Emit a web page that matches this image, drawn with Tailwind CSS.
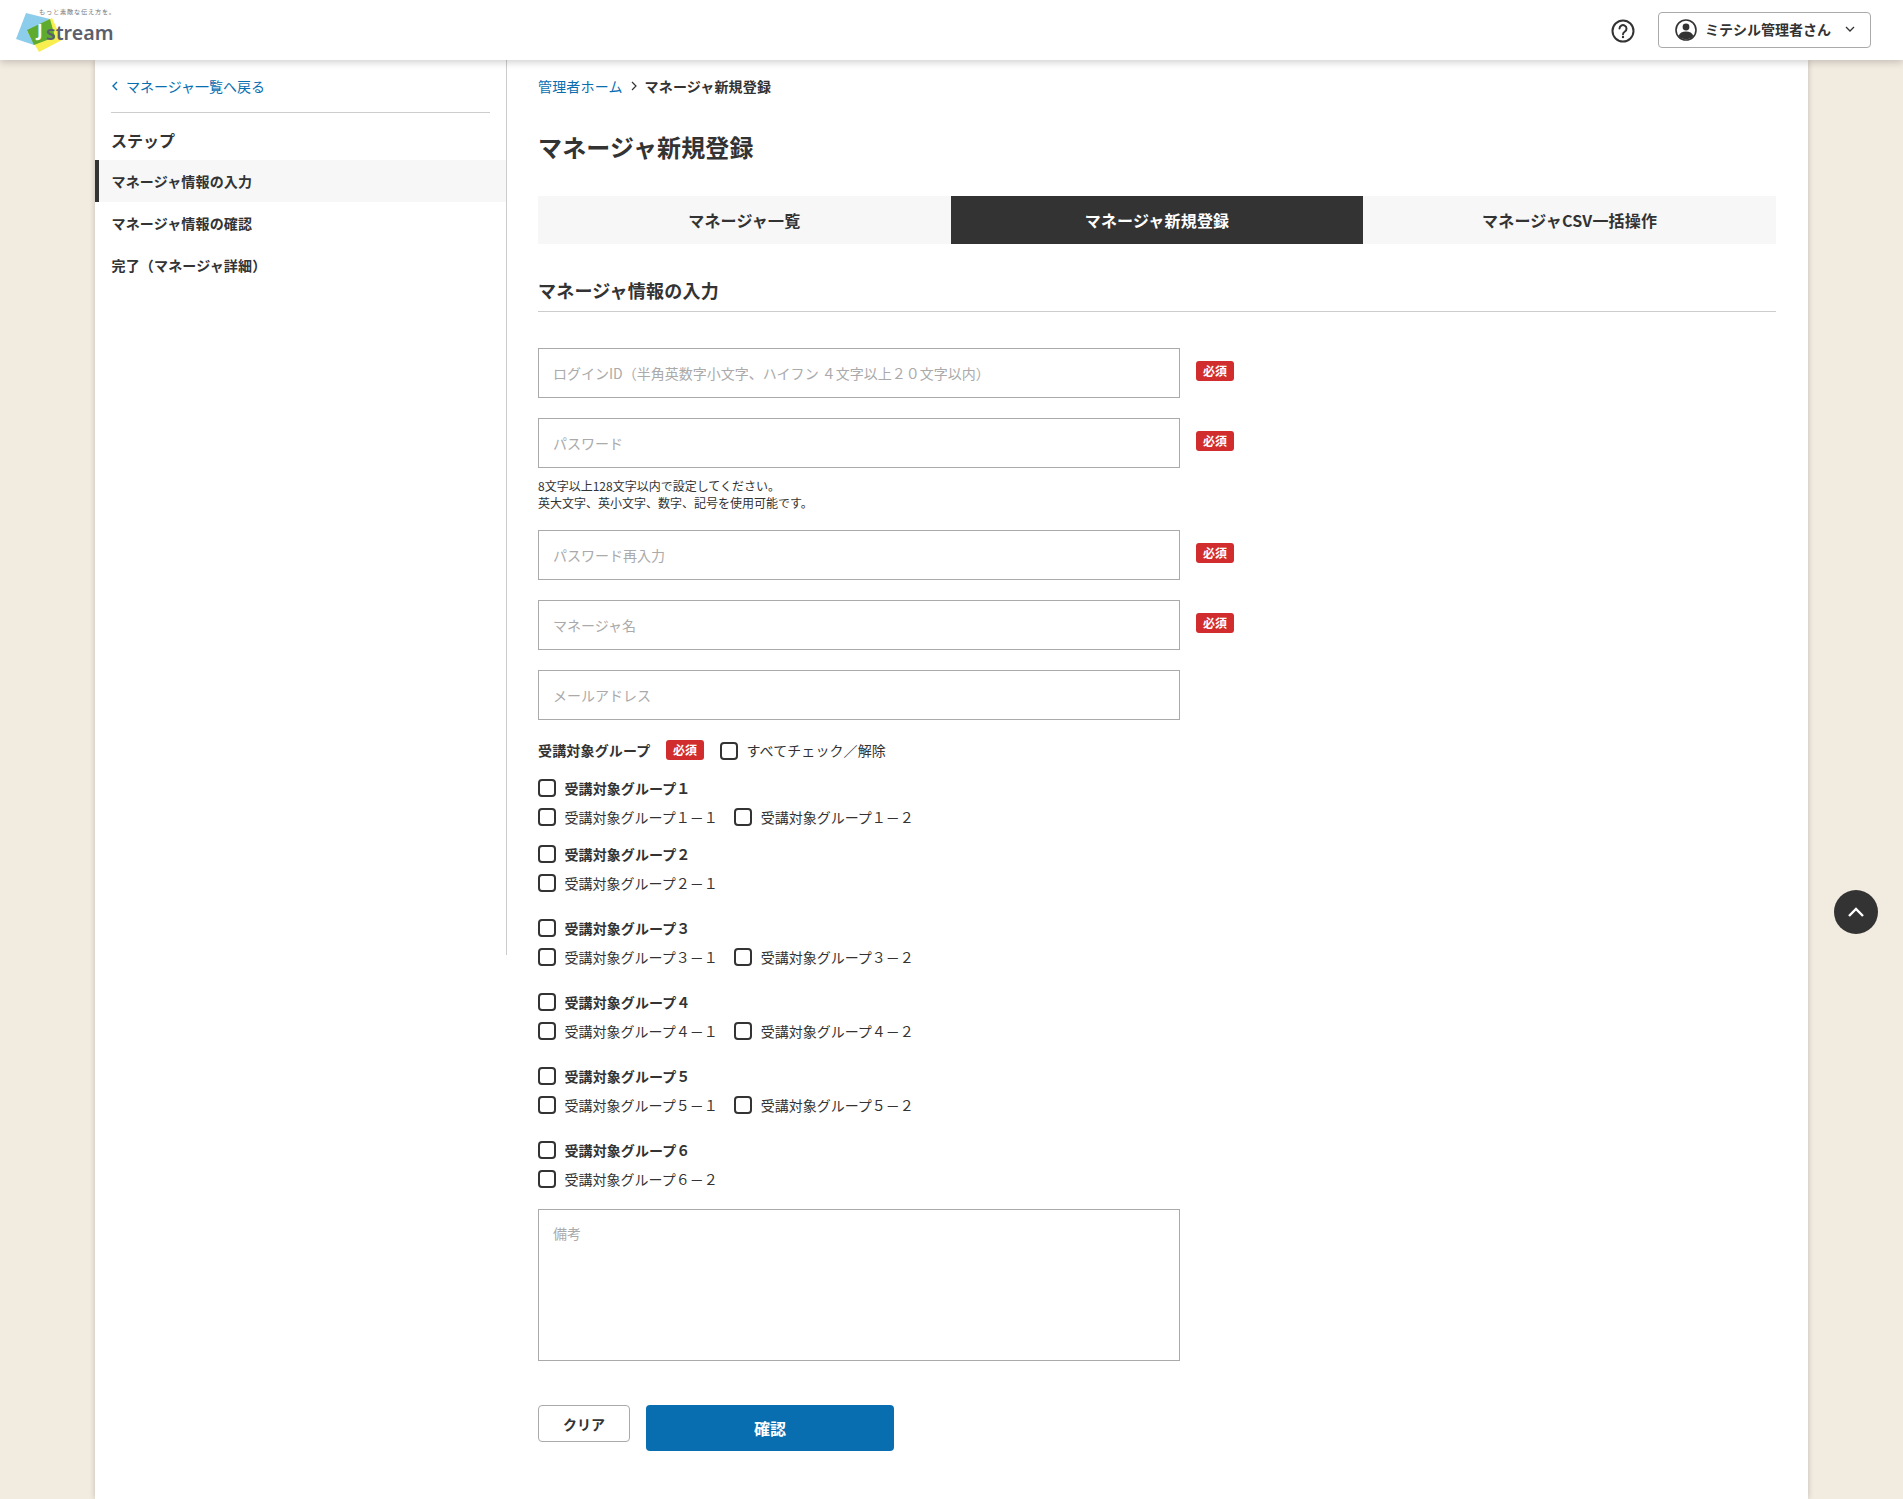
<!DOCTYPE html>
<html lang="ja">
<head>
  <meta charset="UTF-8">
  <title>マネージャ新規登録</title>
  <script src="https://cdn.jsdelivr.net/npm/@tailwindcss/browser@4"></script>
</head>
<body class="relative bg-[#f2ebe0] text-[#333] text-sm font-['Noto_Sans_CJK_JP','Noto_Sans',sans-serif]">
  <!-- header -->
  <header class="relative z-10 h-[60px] bg-white shadow-[0_2px_8px_rgba(0,0,0,0.2)] flex items-center justify-between pr-8">
    <svg class="w-[130px] h-[60px]" viewBox="0 0 130 60">
      <text x="39" y="13.5" font-size="6.2" letter-spacing="0.8" fill="#777">もっと素敵な伝え方を。</text>
      <polygon points="26,13 50,19 34,45 16,39" fill="#8dcdec"/>
      <polygon points="27,31 52,18 62,40 39,52" fill="#f8ee4f"/>
      <polygon points="27,30 50,19 55,37 34,45" fill="#5fab2e"/>
      <text x="37" y="37" font-size="17" font-weight="700" fill="#fff" font-family="Noto Sans">J</text>
      <text x="46" y="40" font-size="19.6" font-weight="600" fill="#5b5e6b" font-family="Noto Sans">stream</text>
    </svg>
    <div class="flex items-center gap-[23px]">
      <svg class="w-6 h-6 mt-[2px]" viewBox="0 0 24 24" fill="none" stroke="#333" stroke-width="2">
        <circle cx="12" cy="12" r="10.5"/>
        <path d="M8.5 9.5a3.5 3.5 0 1 1 5.4 3c-1.2.8-1.9 1.4-1.9 2.8" stroke-linecap="round"/>
        <circle cx="12" cy="18" r="1.2" fill="#333" stroke="none"/>
      </svg>
      <button class="w-[213px] h-9 rounded border border-[#aaa] bg-white flex items-center pl-4 font-bold">
        <svg class="w-[22px] h-[22px]" viewBox="0 0 22 22">
          <circle cx="11" cy="11" r="10" fill="none" stroke="#333" stroke-width="1.6"/>
          <circle cx="11" cy="8" r="3.4" fill="#333"/>
          <path d="M3.6 17c1-3.2 3.8-4.6 7.4-4.6s6.4 1.4 7.4 4.6a10 10 0 0 1-14.8 0z" fill="#333"/>
        </svg>
        <span class="ml-2 -mt-[2px]">ミテシル管理者さん</span>
        <svg class="w-[10px] h-[6px] ml-[14px] -mt-[2px]" viewBox="0 0 10 6" fill="none" stroke="#333" stroke-width="1.3"><path d="M1 1l4 4 4-4"/></svg>
      </button>
    </div>
  </header>

  <div class="w-[1713px] min-h-[1439px] mx-auto bg-white shadow-[0_0_6px_rgba(0,0,0,0.2)] flex items-start">
    <!-- sidebar -->
    <aside class="w-[412px] h-[895px] shrink-0 border-r border-[#ccc] pt-4">
      <div class="mx-4 pb-4 border-b border-[#ccc] w-[379px]">
        <a class="flex items-center h-5 text-[#096eb0]">
          <svg class="w-[7px] h-[10px] mr-2" viewBox="0 0 7 10" fill="none" stroke="#096eb0" stroke-width="1.4"><path d="M6 1L2 5l4 4"/></svg>
          マネージャ一覧へ戻る
        </a>
      </div>
      <h2 class="mt-[15px] ml-4 h-6 leading-6 text-base font-bold">ステップ</h2>
      <ul class="mt-2 font-bold tracking-[0.012em]">
        <li class="h-[42px] leading-[42px] pl-[12.5px] border-l-4 border-[#333] bg-[#f7f7f7]">マネージャ情報の入力</li>
        <li class="h-[42px] leading-[42px] pl-[16.5px]">マネージャ情報の確認</li>
        <li class="h-[42px] leading-[42px] pl-[16.5px]">完了（マネージャ詳細）</li>
      </ul>
    </aside>

    <!-- main -->
    <main class="w-[1238px] ml-[31px] pt-4">
      <nav class="flex items-center h-5">
        <a class="text-[#096eb0] tracking-[0.012em]">管理者ホーム</a>
        <svg class="w-[7px] h-[10px] ml-2 mr-[7px]" viewBox="0 0 7 10" fill="none" stroke="#333" stroke-width="1.2"><path d="M1 1l4 4-4 4"/></svg>
        <span class="font-bold tracking-[0.012em]">マネージャ新規登録</span>
      </nav>
      <h1 class="mt-[34px] h-[34px] leading-[34px] text-2xl font-bold tracking-[0.006em]">マネージャ新規登録</h1>

      <div class="mt-8 grid grid-cols-3 h-12 text-base font-bold tracking-[0.012em]">
        <a class="flex items-center justify-center bg-[#f7f7f7]">マネージャ一覧</a>
        <a class="flex items-center justify-center bg-[#333] text-white">マネージャ新規登録</a>
        <a class="flex items-center justify-center bg-[#f7f7f7]">マネージャCSV一括操作</a>
      </div>

      <h2 class="mt-[33px] h-[35px] leading-[26px] border-b border-[#ccc] text-lg font-bold tracking-[0.012em]">マネージャ情報の入力</h2>

      <form class="mt-9">
        <div class="flex items-start gap-4">
          <input class="w-[642px] h-[50px] border border-[#aaa] px-[14px] placeholder:text-[#aaa]" placeholder="ログインID（半角英数字小文字、ハイフン ４文字以上２０文字以内）">
          <span class="mt-[13px] w-[38px] h-5 leading-5 rounded-[3px] bg-[#d12d2f] text-white text-xs text-center font-bold">必須</span>
        </div>
        <div class="mt-5 flex items-start gap-4">
          <input class="w-[642px] h-[50px] border border-[#aaa] px-[14px] placeholder:text-[#aaa]" placeholder="パスワード">
          <span class="mt-[13px] w-[38px] h-5 leading-5 rounded-[3px] bg-[#d12d2f] text-white text-xs text-center font-bold">必須</span>
        </div>
        <p class="mt-[9px] text-xs leading-[17px]">8文字以上128文字以内で設定してください。<br>英大文字、英小文字、数字、記号を使用可能です。</p>
        <div class="mt-[19px] flex items-start gap-4">
          <input class="w-[642px] h-[50px] border border-[#aaa] px-[14px] placeholder:text-[#aaa]" placeholder="パスワード再入力">
          <span class="mt-[13px] w-[38px] h-5 leading-5 rounded-[3px] bg-[#d12d2f] text-white text-xs text-center font-bold">必須</span>
        </div>
        <div class="mt-5 flex items-start gap-4">
          <input class="w-[642px] h-[50px] border border-[#aaa] px-[14px] placeholder:text-[#aaa]" placeholder="マネージャ名">
          <span class="mt-[13px] w-[38px] h-5 leading-5 rounded-[3px] bg-[#d12d2f] text-white text-xs text-center font-bold">必須</span>
        </div>
        <div class="mt-5">
          <input class="w-[642px] h-[50px] border border-[#aaa] px-[14px] placeholder:text-[#aaa]" placeholder="メールアドレス">
        </div>

        <div class="mt-5 h-5 flex items-center">
          <span class="w-[128px] font-bold tracking-[0.012em]">受講対象グループ</span>
          <span class="w-[38px] h-5 leading-5 rounded-[3px] bg-[#d12d2f] text-white text-xs text-center font-bold">必須</span>
          <label class="ml-4 flex items-center gap-[8.5px] tracking-[0.006em]"><input type="checkbox" class="appearance-none w-[18px] h-[18px] mt-[2px] border-2 border-[#333] rounded-[4px]">すべてチェック／解除</label>
        </div>

        <div class="mt-[19px] flex flex-col gap-[11px]">
          <label class="h-[18px] flex items-center gap-[8.5px] font-bold tracking-[0.006em]"><input type="checkbox" class="appearance-none w-[18px] h-[18px] border-2 border-[#333] rounded-[4px]">受講対象グループ１</label>
          <div class="h-[18px] flex gap-[16.5px]">
            <label class="flex items-center gap-[8.5px]"><input type="checkbox" class="appearance-none w-[18px] h-[18px] border-2 border-[#333] rounded-[4px]">受講対象グループ１－１</label>
            <label class="flex items-center gap-[8.5px]"><input type="checkbox" class="appearance-none w-[18px] h-[18px] border-2 border-[#333] rounded-[4px]">受講対象グループ１－２</label>
          </div>
        </div>
        <div class="mt-[19px] flex flex-col gap-[11px]">
          <label class="h-[18px] flex items-center gap-[8.5px] font-bold tracking-[0.006em]"><input type="checkbox" class="appearance-none w-[18px] h-[18px] border-2 border-[#333] rounded-[4px]">受講対象グループ２</label>
          <div class="h-[18px] flex gap-[16.5px]">
            <label class="flex items-center gap-[8.5px]"><input type="checkbox" class="appearance-none w-[18px] h-[18px] border-2 border-[#333] rounded-[4px]">受講対象グループ２－１</label>
          </div>
        </div>
        <div class="mt-[27px] flex flex-col gap-[11px]">
          <label class="h-[18px] flex items-center gap-[8.5px] font-bold tracking-[0.006em]"><input type="checkbox" class="appearance-none w-[18px] h-[18px] border-2 border-[#333] rounded-[4px]">受講対象グループ３</label>
          <div class="h-[18px] flex gap-[16.5px]">
            <label class="flex items-center gap-[8.5px]"><input type="checkbox" class="appearance-none w-[18px] h-[18px] border-2 border-[#333] rounded-[4px]">受講対象グループ３－１</label>
            <label class="flex items-center gap-[8.5px]"><input type="checkbox" class="appearance-none w-[18px] h-[18px] border-2 border-[#333] rounded-[4px]">受講対象グループ３－２</label>
          </div>
        </div>
        <div class="mt-[27px] flex flex-col gap-[11px]">
          <label class="h-[18px] flex items-center gap-[8.5px] font-bold tracking-[0.006em]"><input type="checkbox" class="appearance-none w-[18px] h-[18px] border-2 border-[#333] rounded-[4px]">受講対象グループ４</label>
          <div class="h-[18px] flex gap-[16.5px]">
            <label class="flex items-center gap-[8.5px]"><input type="checkbox" class="appearance-none w-[18px] h-[18px] border-2 border-[#333] rounded-[4px]">受講対象グループ４－１</label>
            <label class="flex items-center gap-[8.5px]"><input type="checkbox" class="appearance-none w-[18px] h-[18px] border-2 border-[#333] rounded-[4px]">受講対象グループ４－２</label>
          </div>
        </div>
        <div class="mt-[27px] flex flex-col gap-[11px]">
          <label class="h-[18px] flex items-center gap-[8.5px] font-bold tracking-[0.006em]"><input type="checkbox" class="appearance-none w-[18px] h-[18px] border-2 border-[#333] rounded-[4px]">受講対象グループ５</label>
          <div class="h-[18px] flex gap-[16.5px]">
            <label class="flex items-center gap-[8.5px]"><input type="checkbox" class="appearance-none w-[18px] h-[18px] border-2 border-[#333] rounded-[4px]">受講対象グループ５－１</label>
            <label class="flex items-center gap-[8.5px]"><input type="checkbox" class="appearance-none w-[18px] h-[18px] border-2 border-[#333] rounded-[4px]">受講対象グループ５－２</label>
          </div>
        </div>
        <div class="mt-[27px] flex flex-col gap-[11px]">
          <label class="h-[18px] flex items-center gap-[8.5px] font-bold tracking-[0.006em]"><input type="checkbox" class="appearance-none w-[18px] h-[18px] border-2 border-[#333] rounded-[4px]">受講対象グループ６</label>
          <div class="h-[18px] flex gap-[16.5px]">
            <label class="flex items-center gap-[8.5px]"><input type="checkbox" class="appearance-none w-[18px] h-[18px] border-2 border-[#333] rounded-[4px]">受講対象グループ６－２</label>
          </div>
        </div>

        <textarea class="block mt-[21px] w-[642px] h-[152px] border border-[#aaa] px-[14px] py-[13px] resize-none placeholder:text-[#aaa]" placeholder="備考"></textarea>

        <div class="mt-11 flex items-start gap-4">
          <button type="button" class="w-[92px] h-[37px] border border-[#aaa] rounded bg-white font-bold">クリア</button>
          <button type="button" class="w-[248px] h-[46px] rounded bg-[#096eb0] text-white text-base font-bold">確認</button>
        </div>
      </form>
    </main>
  </div>

  <!-- page top button -->
  <button class="absolute left-[1834px] top-[890px] z-20 w-11 h-11 rounded-full bg-[#333] flex items-center justify-center">
    <svg class="w-4 h-[10px]" viewBox="0 0 16 10" fill="none" stroke="#fff" stroke-width="2.4"><path d="M1 9l7-7 7 7"/></svg>
  </button>
</body>
</html>
